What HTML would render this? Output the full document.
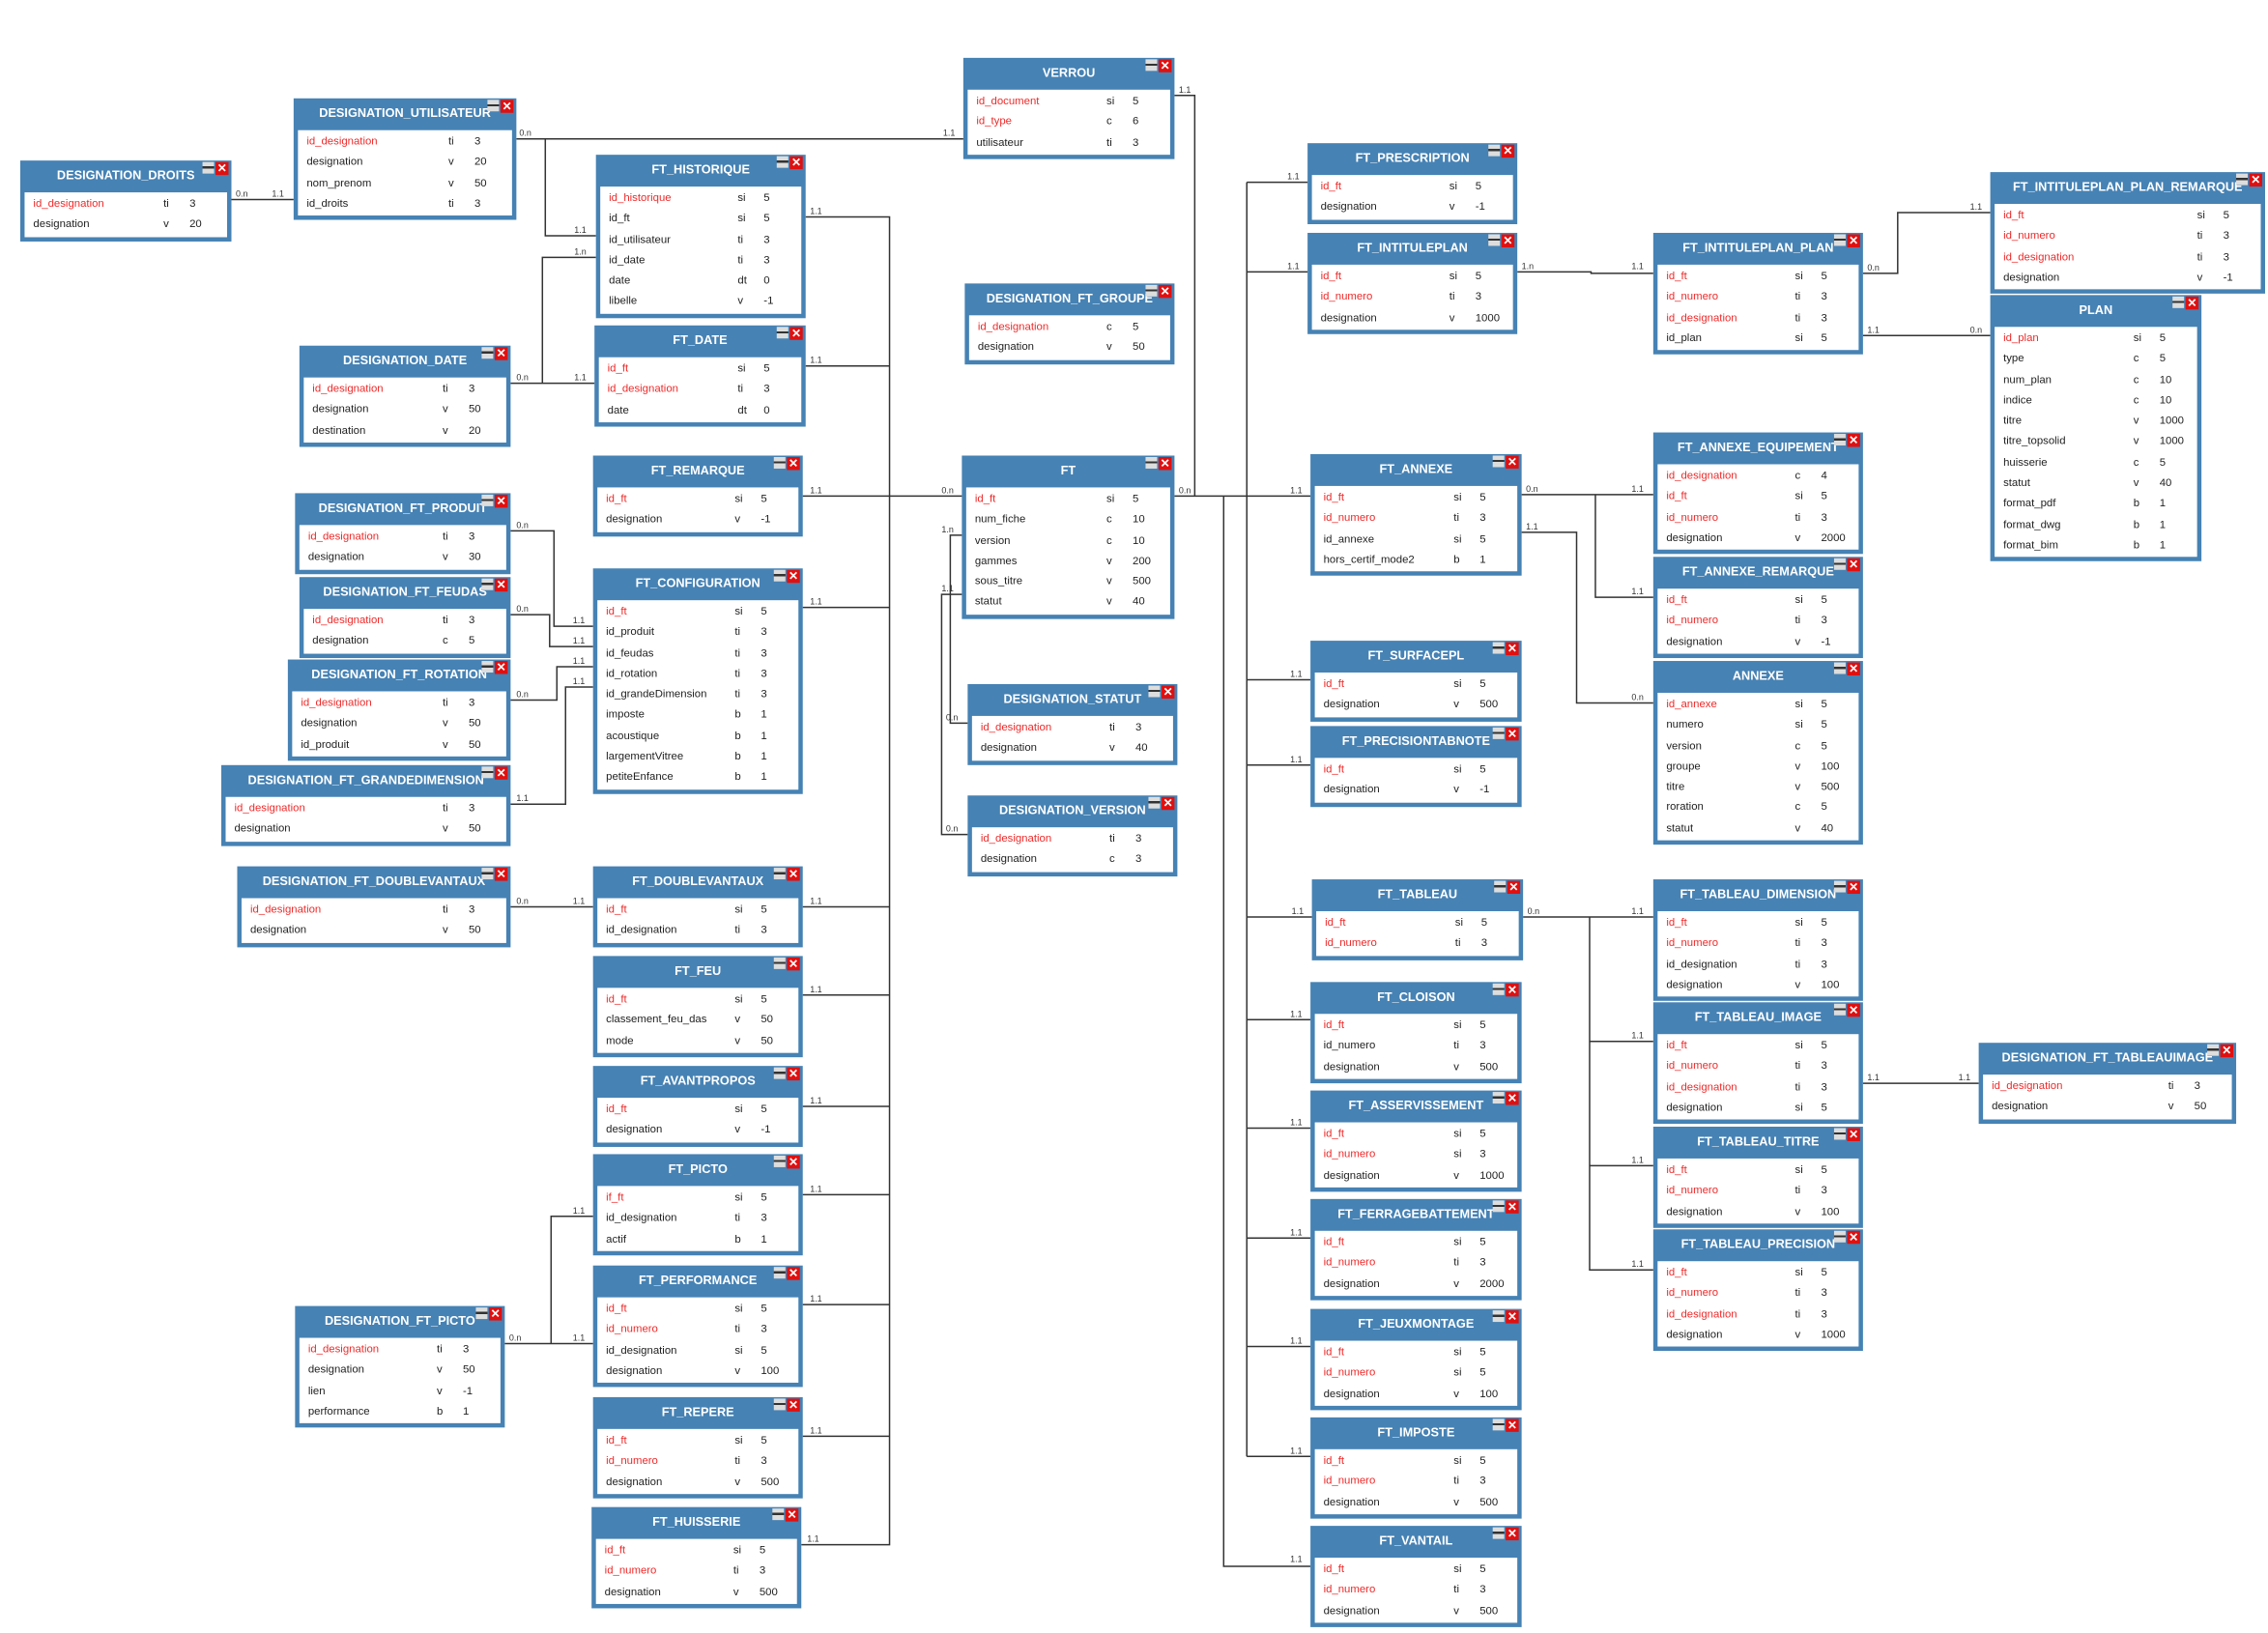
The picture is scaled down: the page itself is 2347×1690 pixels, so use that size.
<!DOCTYPE html>
<html><head><meta charset="utf-8">
<style>
html,body{margin:0;padding:0;background:#fff;overflow:hidden}
#c{position:absolute;left:0;top:0;width:1568px;height:1129px;transform:scale(1.4968);transform-origin:0 0;font-family:"Liberation Sans",sans-serif}
.b{position:absolute;background:#4682b4;padding:0 3px 3px;box-sizing:border-box}
.h{height:22px;color:#fff;font-weight:bold;font-size:8.5px;text-align:center;line-height:21px;white-space:nowrap}
.i{background:#fff;padding:1px 0}
.r{height:14.3px;line-height:14.3px;font-size:7.6px;position:relative;padding-left:6px;color:#222;white-space:nowrap}
.r.k{color:#ee2a2a}
.r i{position:absolute;left:calc(100% - 44px);font-style:normal;color:#222}
.r b{position:absolute;left:calc(100% - 26px);font-weight:normal;color:#222}
.b:before{content:"";position:absolute;right:12px;top:1px;width:8px;height:8px;background:linear-gradient(#ddd 3px,#333 3px,#333 4.5px,#ddd 4.5px)}
.b:after{content:"\2715";position:absolute;right:2px;top:1px;width:9px;height:9px;background:#e01010;color:#fff;font-size:8px;line-height:9px;text-align:center;font-weight:bold}
svg{position:absolute;left:0;top:0}
.l{font-size:6px;fill:#333;font-family:"Liberation Sans",sans-serif}
</style></head><body><div id="c">
<svg width="1568" height="1129"><g stroke="#333" stroke-width="1" fill="none">
<path d="M160 138H203"/>
<path d="M357 96H666"/>
<path d="M377 96V163H412"/>
<path d="M353 265H411M375 265V178H412"/>
<path d="M557 150H615V1068H554M557 253H615M555 343H665M555 420H615M555 627H615M555 688H615M555 765H615M555 826H615M555 902H615M555 993H615"/>
<path d="M812 66H826V343"/>
<path d="M812 343H906M862 126V1007M862 126H904M862 188H904M862 470H906M862 529H906M862 634H907M862 705H906M862 780H906M862 856H906M862 931H906M862 1007H906M846 343V1083H906"/>
<path d="M669 500H657V370H665M669 577H651V411H665"/>
<path d="M1049 188H1100V189H1143"/>
<path d="M1288 189H1312V147H1376M1288 232H1376"/>
<path d="M1052 342H1143M1103 342V413H1143M1052 368H1090V486H1143"/>
<path d="M1053 634H1143M1099 634V878H1143M1099 720H1143M1099 806H1143"/>
<path d="M1288 749H1368"/>
<path d="M353 367H383V433H410M353 425H380V447H410M353 484H385V461H410M353 556H391V475H410"/>
<path d="M353 627H410"/>
<path d="M349 929H410M381 929V841H410"/>
</g>
<g class="l">
<text x="163" y="136">0.n</text><text x="188" y="136">1.1</text>
<text x="359" y="94">0.n</text><text x="652" y="94">1.1</text>
<text x="397" y="161">1.1</text><text x="397" y="176">1.n</text>
<text x="357" y="263">0.n</text><text x="397" y="263">1.1</text>
<text x="560" y="148">1.1</text><text x="560" y="251">1.1</text><text x="560" y="341">1.1</text><text x="560" y="418">1.1</text><text x="560" y="625">1.1</text><text x="560" y="686">1.1</text><text x="560" y="763">1.1</text><text x="560" y="824">1.1</text><text x="560" y="900">1.1</text><text x="560" y="991">1.1</text><text x="558" y="1066">1.1</text>
<text x="651" y="341">0.n</text><text x="815" y="341">0.n</text><text x="815" y="64">1.1</text>
<text x="651" y="368">1.n</text><text x="651" y="409">1.1</text><text x="654" y="498">0.n</text><text x="654" y="575">0.n</text>
<text x="890" y="124">1.1</text><text x="890" y="186">1.1</text><text x="892" y="341">1.1</text><text x="892" y="468">1.1</text><text x="892" y="527">1.1</text><text x="893" y="632">1.1</text><text x="892" y="703">1.1</text><text x="892" y="778">1.1</text><text x="892" y="854">1.1</text><text x="892" y="929">1.1</text><text x="892" y="1005">1.1</text><text x="892" y="1080">1.1</text>
<text x="1052" y="186">1.n</text><text x="1128" y="186">1.1</text><text x="1291" y="187">0.n</text><text x="1362" y="145">1.1</text><text x="1291" y="230">1.1</text><text x="1362" y="230">0.n</text>
<text x="1055" y="340">0.n</text><text x="1128" y="340">1.1</text><text x="1128" y="411">1.1</text><text x="1055" y="366">1.1</text><text x="1128" y="484">0.n</text>
<text x="1056" y="632">0.n</text><text x="1128" y="632">1.1</text><text x="1128" y="718">1.1</text><text x="1128" y="804">1.1</text><text x="1128" y="876">1.1</text>
<text x="1291" y="747">1.1</text><text x="1354" y="747">1.1</text>
<text x="357" y="365">0.n</text><text x="357" y="423">0.n</text><text x="357" y="482">0.n</text><text x="357" y="554">1.1</text><text x="396" y="431">1.1</text><text x="396" y="445">1.1</text><text x="396" y="459">1.1</text><text x="396" y="473">1.1</text>
<text x="357" y="625">0.n</text><text x="396" y="625">1.1</text>
<text x="352" y="927">0.n</text><text x="396" y="927">1.1</text><text x="396" y="839">1.1</text>
</g></svg>

<div class="b" style="left:14px;top:111px;width:146px"><div class="h">DESIGNATION_DROITS</div><div class="i"><div class="r k">id_designation<i>ti</i><b>3</b></div><div class="r">designation<i>v</i><b>20</b></div></div></div>
<div class="b" style="left:203px;top:68px;width:154px"><div class="h">DESIGNATION_UTILISATEUR</div><div class="i"><div class="r k">id_designation<i>ti</i><b>3</b></div><div class="r">designation<i>v</i><b>20</b></div><div class="r">nom_prenom<i>v</i><b>50</b></div><div class="r">id_droits<i>ti</i><b>3</b></div></div></div>
<div class="b" style="left:666px;top:40px;width:146px"><div class="h">VERROU</div><div class="i"><div class="r k">id_document<i>si</i><b>5</b></div><div class="r k">id_type<i>c</i><b>6</b></div><div class="r">utilisateur<i>ti</i><b>3</b></div></div></div>
<div class="b" style="left:412px;top:107px;width:145px"><div class="h">FT_HISTORIQUE</div><div class="i"><div class="r k">id_historique<i>si</i><b>5</b></div><div class="r">id_ft<i>si</i><b>5</b></div><div class="r">id_utilisateur<i>ti</i><b>3</b></div><div class="r">id_date<i>ti</i><b>3</b></div><div class="r">date<i>dt</i><b>0</b></div><div class="r">libelle<i>v</i><b>-1</b></div></div></div>
<div class="b" style="left:411px;top:225px;width:146px"><div class="h">FT_DATE</div><div class="i"><div class="r k">id_ft<i>si</i><b>5</b></div><div class="r k">id_designation<i>ti</i><b>3</b></div><div class="r">date<i>dt</i><b>0</b></div></div></div>
<div class="b" style="left:207px;top:239px;width:146px"><div class="h">DESIGNATION_DATE</div><div class="i"><div class="r k">id_designation<i>ti</i><b>3</b></div><div class="r">designation<i>v</i><b>50</b></div><div class="r">destination<i>v</i><b>20</b></div></div></div>
<div class="b" style="left:410px;top:315px;width:145px"><div class="h">FT_REMARQUE</div><div class="i"><div class="r k">id_ft<i>si</i><b>5</b></div><div class="r">designation<i>v</i><b>-1</b></div></div></div>
<div class="b" style="left:204px;top:341px;width:149px"><div class="h">DESIGNATION_FT_PRODUIT</div><div class="i"><div class="r k">id_designation<i>ti</i><b>3</b></div><div class="r">designation<i>v</i><b>30</b></div></div></div>
<div class="b" style="left:207px;top:399px;width:146px"><div class="h">DESIGNATION_FT_FEUDAS</div><div class="i"><div class="r k">id_designation<i>ti</i><b>3</b></div><div class="r">designation<i>c</i><b>5</b></div></div></div>
<div class="b" style="left:410px;top:393px;width:145px"><div class="h">FT_CONFIGURATION</div><div class="i"><div class="r k">id_ft<i>si</i><b>5</b></div><div class="r">id_produit<i>ti</i><b>3</b></div><div class="r">id_feudas<i>ti</i><b>3</b></div><div class="r">id_rotation<i>ti</i><b>3</b></div><div class="r">id_grandeDimension<i>ti</i><b>3</b></div><div class="r">imposte<i>b</i><b>1</b></div><div class="r">acoustique<i>b</i><b>1</b></div><div class="r">largementVitree<i>b</i><b>1</b></div><div class="r">petiteEnfance<i>b</i><b>1</b></div></div></div>
<div class="b" style="left:199px;top:456px;width:154px"><div class="h">DESIGNATION_FT_ROTATION</div><div class="i"><div class="r k">id_designation<i>ti</i><b>3</b></div><div class="r">designation<i>v</i><b>50</b></div><div class="r">id_produit<i>v</i><b>50</b></div></div></div>
<div class="b" style="left:153px;top:529px;width:200px"><div class="h">DESIGNATION_FT_GRANDEDIMENSION</div><div class="i"><div class="r k">id_designation<i>ti</i><b>3</b></div><div class="r">designation<i>v</i><b>50</b></div></div></div>
<div class="b" style="left:164px;top:599px;width:189px"><div class="h">DESIGNATION_FT_DOUBLEVANTAUX</div><div class="i"><div class="r k">id_designation<i>ti</i><b>3</b></div><div class="r">designation<i>v</i><b>50</b></div></div></div>
<div class="b" style="left:410px;top:599px;width:145px"><div class="h">FT_DOUBLEVANTAUX</div><div class="i"><div class="r k">id_ft<i>si</i><b>5</b></div><div class="r">id_designation<i>ti</i><b>3</b></div></div></div>
<div class="b" style="left:410px;top:661px;width:145px"><div class="h">FT_FEU</div><div class="i"><div class="r k">id_ft<i>si</i><b>5</b></div><div class="r">classement_feu_das<i>v</i><b>50</b></div><div class="r">mode<i>v</i><b>50</b></div></div></div>
<div class="b" style="left:410px;top:737px;width:145px"><div class="h">FT_AVANTPROPOS</div><div class="i"><div class="r k">id_ft<i>si</i><b>5</b></div><div class="r">designation<i>v</i><b>-1</b></div></div></div>
<div class="b" style="left:410px;top:798px;width:145px"><div class="h">FT_PICTO</div><div class="i"><div class="r k">if_ft<i>si</i><b>5</b></div><div class="r">id_designation<i>ti</i><b>3</b></div><div class="r">actif<i>b</i><b>1</b></div></div></div>
<div class="b" style="left:410px;top:875px;width:145px"><div class="h">FT_PERFORMANCE</div><div class="i"><div class="r k">id_ft<i>si</i><b>5</b></div><div class="r k">id_numero<i>ti</i><b>3</b></div><div class="r">id_designation<i>si</i><b>5</b></div><div class="r">designation<i>v</i><b>100</b></div></div></div>
<div class="b" style="left:204px;top:903px;width:145px"><div class="h">DESIGNATION_FT_PICTO</div><div class="i"><div class="r k">id_designation<i>ti</i><b>3</b></div><div class="r">designation<i>v</i><b>50</b></div><div class="r">lien<i>v</i><b>-1</b></div><div class="r">performance<i>b</i><b>1</b></div></div></div>
<div class="b" style="left:410px;top:966px;width:145px"><div class="h">FT_REPERE</div><div class="i"><div class="r k">id_ft<i>si</i><b>5</b></div><div class="r k">id_numero<i>ti</i><b>3</b></div><div class="r">designation<i>v</i><b>500</b></div></div></div>
<div class="b" style="left:409px;top:1042px;width:145px"><div class="h">FT_HUISSERIE</div><div class="i"><div class="r k">id_ft<i>si</i><b>5</b></div><div class="r k">id_numero<i>ti</i><b>3</b></div><div class="r">designation<i>v</i><b>500</b></div></div></div>
<div class="b" style="left:667px;top:196px;width:145px"><div class="h">DESIGNATION_FT_GROUPE</div><div class="i"><div class="r k">id_designation<i>c</i><b>5</b></div><div class="r">designation<i>v</i><b>50</b></div></div></div>
<div class="b" style="left:665px;top:315px;width:147px"><div class="h">FT</div><div class="i"><div class="r k">id_ft<i>si</i><b>5</b></div><div class="r">num_fiche<i>c</i><b>10</b></div><div class="r">version<i>c</i><b>10</b></div><div class="r">gammes<i>v</i><b>200</b></div><div class="r">sous_titre<i>v</i><b>500</b></div><div class="r">statut<i>v</i><b>40</b></div></div></div>
<div class="b" style="left:669px;top:473px;width:145px"><div class="h">DESIGNATION_STATUT</div><div class="i"><div class="r k">id_designation<i>ti</i><b>3</b></div><div class="r">designation<i>v</i><b>40</b></div></div></div>
<div class="b" style="left:669px;top:550px;width:145px"><div class="h">DESIGNATION_VERSION</div><div class="i"><div class="r k">id_designation<i>ti</i><b>3</b></div><div class="r">designation<i>c</i><b>3</b></div></div></div>
<div class="b" style="left:904px;top:99px;width:145px"><div class="h">FT_PRESCRIPTION</div><div class="i"><div class="r k">id_ft<i>si</i><b>5</b></div><div class="r">designation<i>v</i><b>-1</b></div></div></div>
<div class="b" style="left:904px;top:161px;width:145px"><div class="h">FT_INTITULEPLAN</div><div class="i"><div class="r k">id_ft<i>si</i><b>5</b></div><div class="r k">id_numero<i>ti</i><b>3</b></div><div class="r">designation<i>v</i><b>1000</b></div></div></div>
<div class="b" style="left:906px;top:314px;width:146px"><div class="h">FT_ANNEXE</div><div class="i"><div class="r k">id_ft<i>si</i><b>5</b></div><div class="r k">id_numero<i>ti</i><b>3</b></div><div class="r">id_annexe<i>si</i><b>5</b></div><div class="r">hors_certif_mode2<i>b</i><b>1</b></div></div></div>
<div class="b" style="left:906px;top:443px;width:146px"><div class="h">FT_SURFACEPL</div><div class="i"><div class="r k">id_ft<i>si</i><b>5</b></div><div class="r">designation<i>v</i><b>500</b></div></div></div>
<div class="b" style="left:906px;top:502px;width:146px"><div class="h">FT_PRECISIONTABNOTE</div><div class="i"><div class="r k">id_ft<i>si</i><b>5</b></div><div class="r">designation<i>v</i><b>-1</b></div></div></div>
<div class="b" style="left:907px;top:608px;width:146px"><div class="h">FT_TABLEAU</div><div class="i"><div class="r k">id_ft<i>si</i><b>5</b></div><div class="r k">id_numero<i>ti</i><b>3</b></div></div></div>
<div class="b" style="left:906px;top:679px;width:146px"><div class="h">FT_CLOISON</div><div class="i"><div class="r k">id_ft<i>si</i><b>5</b></div><div class="r">id_numero<i>ti</i><b>3</b></div><div class="r">designation<i>v</i><b>500</b></div></div></div>
<div class="b" style="left:906px;top:754px;width:146px"><div class="h">FT_ASSERVISSEMENT</div><div class="i"><div class="r k">id_ft<i>si</i><b>5</b></div><div class="r k">id_numero<i>si</i><b>3</b></div><div class="r">designation<i>v</i><b>1000</b></div></div></div>
<div class="b" style="left:906px;top:829px;width:146px"><div class="h">FT_FERRAGEBATTEMENT</div><div class="i"><div class="r k">id_ft<i>si</i><b>5</b></div><div class="r k">id_numero<i>ti</i><b>3</b></div><div class="r">designation<i>v</i><b>2000</b></div></div></div>
<div class="b" style="left:906px;top:905px;width:146px"><div class="h">FT_JEUXMONTAGE</div><div class="i"><div class="r k">id_ft<i>si</i><b>5</b></div><div class="r k">id_numero<i>si</i><b>5</b></div><div class="r">designation<i>v</i><b>100</b></div></div></div>
<div class="b" style="left:906px;top:980px;width:146px"><div class="h">FT_IMPOSTE</div><div class="i"><div class="r k">id_ft<i>si</i><b>5</b></div><div class="r k">id_numero<i>ti</i><b>3</b></div><div class="r">designation<i>v</i><b>500</b></div></div></div>
<div class="b" style="left:906px;top:1055px;width:146px"><div class="h">FT_VANTAIL</div><div class="i"><div class="r k">id_ft<i>si</i><b>5</b></div><div class="r k">id_numero<i>ti</i><b>3</b></div><div class="r">designation<i>v</i><b>500</b></div></div></div>
<div class="b" style="left:1143px;top:161px;width:145px"><div class="h">FT_INTITULEPLAN_PLAN</div><div class="i"><div class="r k">id_ft<i>si</i><b>5</b></div><div class="r k">id_numero<i>ti</i><b>3</b></div><div class="r k">id_designation<i>ti</i><b>3</b></div><div class="r">id_plan<i>si</i><b>5</b></div></div></div>
<div class="b" style="left:1376px;top:119px;width:190px"><div class="h">FT_INTITULEPLAN_PLAN_REMARQUE</div><div class="i"><div class="r k">id_ft<i>si</i><b>5</b></div><div class="r k">id_numero<i>ti</i><b>3</b></div><div class="r k">id_designation<i>ti</i><b>3</b></div><div class="r">designation<i>v</i><b>-1</b></div></div></div>
<div class="b" style="left:1376px;top:204px;width:146px"><div class="h">PLAN</div><div class="i"><div class="r k">id_plan<i>si</i><b>5</b></div><div class="r">type<i>c</i><b>5</b></div><div class="r">num_plan<i>c</i><b>10</b></div><div class="r">indice<i>c</i><b>10</b></div><div class="r">titre<i>v</i><b>1000</b></div><div class="r">titre_topsolid<i>v</i><b>1000</b></div><div class="r">huisserie<i>c</i><b>5</b></div><div class="r">statut<i>v</i><b>40</b></div><div class="r">format_pdf<i>b</i><b>1</b></div><div class="r">format_dwg<i>b</i><b>1</b></div><div class="r">format_bim<i>b</i><b>1</b></div></div></div>
<div class="b" style="left:1143px;top:299px;width:145px"><div class="h">FT_ANNEXE_EQUIPEMENT</div><div class="i"><div class="r k">id_designation<i>c</i><b>4</b></div><div class="r k">id_ft<i>si</i><b>5</b></div><div class="r k">id_numero<i>ti</i><b>3</b></div><div class="r">designation<i>v</i><b>2000</b></div></div></div>
<div class="b" style="left:1143px;top:385px;width:145px"><div class="h">FT_ANNEXE_REMARQUE</div><div class="i"><div class="r k">id_ft<i>si</i><b>5</b></div><div class="r k">id_numero<i>ti</i><b>3</b></div><div class="r">designation<i>v</i><b>-1</b></div></div></div>
<div class="b" style="left:1143px;top:457px;width:145px"><div class="h">ANNEXE</div><div class="i"><div class="r k">id_annexe<i>si</i><b>5</b></div><div class="r">numero<i>si</i><b>5</b></div><div class="r">version<i>c</i><b>5</b></div><div class="r">groupe<i>v</i><b>100</b></div><div class="r">titre<i>v</i><b>500</b></div><div class="r">roration<i>c</i><b>5</b></div><div class="r">statut<i>v</i><b>40</b></div></div></div>
<div class="b" style="left:1143px;top:608px;width:145px"><div class="h">FT_TABLEAU_DIMENSION</div><div class="i"><div class="r k">id_ft<i>si</i><b>5</b></div><div class="r k">id_numero<i>ti</i><b>3</b></div><div class="r">id_designation<i>ti</i><b>3</b></div><div class="r">designation<i>v</i><b>100</b></div></div></div>
<div class="b" style="left:1143px;top:693px;width:145px"><div class="h">FT_TABLEAU_IMAGE</div><div class="i"><div class="r k">id_ft<i>si</i><b>5</b></div><div class="r k">id_numero<i>ti</i><b>3</b></div><div class="r k">id_designation<i>ti</i><b>3</b></div><div class="r">designation<i>si</i><b>5</b></div></div></div>
<div class="b" style="left:1143px;top:779px;width:145px"><div class="h">FT_TABLEAU_TITRE</div><div class="i"><div class="r k">id_ft<i>si</i><b>5</b></div><div class="r k">id_numero<i>ti</i><b>3</b></div><div class="r">designation<i>v</i><b>100</b></div></div></div>
<div class="b" style="left:1143px;top:850px;width:145px"><div class="h">FT_TABLEAU_PRECISION</div><div class="i"><div class="r k">id_ft<i>si</i><b>5</b></div><div class="r k">id_numero<i>ti</i><b>3</b></div><div class="r k">id_designation<i>ti</i><b>3</b></div><div class="r">designation<i>v</i><b>1000</b></div></div></div>
<div class="b" style="left:1368px;top:721px;width:178px"><div class="h">DESIGNATION_FT_TABLEAUIMAGE</div><div class="i"><div class="r k">id_designation<i>ti</i><b>3</b></div><div class="r">designation<i>v</i><b>50</b></div></div></div>
</div></body></html>
